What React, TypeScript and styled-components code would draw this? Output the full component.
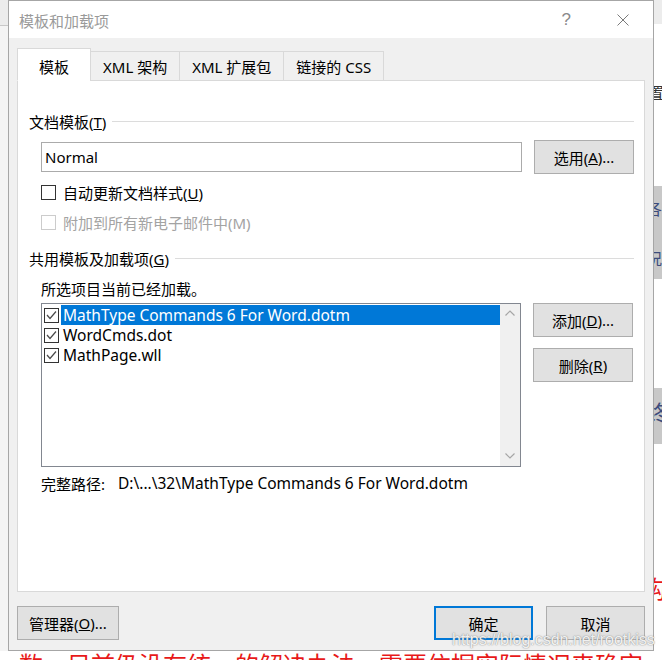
import styled, { createGlobalStyle } from "styled-components";

const GlobalStyle = createGlobalStyle`
  html, body {
    margin: 0;
    padding: 0;
    background: #ffffff;
  }
  body {
    font-family: "Noto Sans", "Noto Sans CJK SC", sans-serif;
  }
`;

const uiFont = `"Noto Sans", "Noto Sans CJK SC", sans-serif`;

const Page = styled.div`
  position: relative;
  width: 662px;
  height: 660px;
  overflow: hidden;
  background: #ffffff;
`;

const Stage = styled.div`
  display: flex;
  align-items: flex-start;
  height: 651px;
`;

const LeftStrip = styled.div`
  flex: none;
  width: 8px;
  height: 651px;
  background: #f4f4f4;
`;

const StripTop = styled.div`
  height: 25px;
  background: #ececec;
  border-bottom: 1px solid #c8c8c8;
`;

const RightStrip = styled.div`
  flex: none;
  width: 9px;
  height: 651px;
  overflow: hidden;
  display: flex;
  flex-direction: column;
  background: #ffffff;
`;

const StripBlock = styled.div<{ $top: number; $h: number; $bg: string }>`
  flex: none;
  margin-top: ${(p) => p.$top}px;
  height: ${(p) => p.$h}px;
  background: ${(p) => p.$bg};
  display: flex;
  flex-direction: column;
  overflow: hidden;
`;

const StripGlyph = styled.span<{ $top: number; $size: number; $color: string; $shift: number }>`
  display: block;
  margin-top: ${(p) => p.$top}px;
  margin-left: ${(p) => p.$shift}px;
  font-family: "Noto Sans CJK SC", sans-serif;
  font-size: ${(p) => p.$size}px;
  line-height: ${(p) => p.$size}px;
  color: ${(p) => p.$color};
  white-space: nowrap;
`;

const Dialog = styled.div`
  flex: none;
  box-sizing: border-box;
  width: 646px;
  height: 651px;
  border: 1px solid #a6a6a6;
  background: #f0f0f0;
  display: flex;
  flex-direction: column;
  font-family: ${uiFont};
  font-size: 15px;
  color: #000000;
`;

const TitleBar = styled.div`
  flex: none;
  height: 37px;
  background: #ffffff;
  display: flex;
  align-items: center;
  padding-left: 10px;
`;

const Title = styled.span`
  flex: 1;
  font-size: 15px;
  color: #9a9a9a;
  margin-top: 2px;
`;

const Help = styled.span`
  font-family: "Liberation Sans", sans-serif;
  font-size: 17px;
  color: #8a8a8a;
  margin-right: 46px;
  margin-top: 1px;
`;

const CloseIcon = styled.svg`
  width: 12px;
  height: 12px;
  margin-right: 24px;
  margin-top: 1px;
`;

const Body = styled.div`
  flex: 1;
  display: flex;
  flex-direction: column;
  padding: 10px 8px 0;
`;

const TabRow = styled.div`
  position: relative;
  z-index: 1;
  display: flex;
  align-items: flex-end;
  height: 33px;
  margin-bottom: -1px;
`;

const Tab = styled.div<{ $active?: boolean }>`
  box-sizing: border-box;
  height: ${(p) => (p.$active ? 33 : 30)}px;
  min-width: 74px;
  padding: ${(p) => (p.$active ? "3px" : "0")} 12px 0;
  margin-left: -1px;
  display: flex;
  align-items: center;
  justify-content: center;
  border: 1px solid #d9d9d9;
  border-bottom-color: ${(p) => (p.$active ? "#ffffff" : "#d9d9d9")};
  background: ${(p) => (p.$active ? "#ffffff" : "#f0f0f0")};
  white-space: nowrap;

  &:first-child {
    margin-left: 0;
  }
`;

const Panel = styled.div`
  flex: none;
  box-sizing: border-box;
  height: 512px;
  background: #ffffff;
  border: 1px solid #d9d9d9;
  padding: 30px 10px 0 11px;
  display: flex;
  flex-direction: column;
`;

const GroupHeader = styled.div<{ $top?: number }>`
  display: flex;
  align-items: center;
  gap: 6px;
  height: 20px;
  margin-top: ${(p) => p.$top ?? 0}px;
  white-space: nowrap;

  &::after {
    content: "";
    flex: 1;
    height: 1px;
    background: #dcdcdc;
  }
`;

const Indented = styled.div<{ $top: number }>`
  display: flex;
  align-items: center;
  gap: 12px;
  margin-top: ${(p) => p.$top}px;
  padding-left: 12px;
`;

const TextBox = styled.div`
  flex: 1;
  box-sizing: border-box;
  height: 30px;
  border: 1px solid #ababab;
  background: #ffffff;
  display: flex;
  align-items: center;
  padding-left: 3px;
`;

const Button = styled.div<{ $w?: number; $default?: boolean }>`
  flex: none;
  box-sizing: border-box;
  width: ${(p) => p.$w ?? 100}px;
  height: 34px;
  display: flex;
  align-items: center;
  justify-content: center;
  background: #e1e1e1;
  border: ${(p) => (p.$default ? "2px solid #0078d7" : "1px solid #adadad")};
  white-space: nowrap;
`;

const CheckLine = styled.label<{ $disabled?: boolean }>`
  display: flex;
  align-items: center;
  gap: 7px;
  height: 20px;
  color: ${(p) => (p.$disabled ? "#a3a3a3" : "#000000")};
  white-space: nowrap;
`;

const Box = styled.span<{ $disabled?: boolean }>`
  flex: none;
  box-sizing: border-box;
  width: 15px;
  height: 15px;
  border: 1px solid ${(p) => (p.$disabled ? "#cccccc" : "#333333")};
  background: #ffffff;
  display: flex;
  align-items: center;
  justify-content: center;
`;

const Note = styled.div`
  height: 20px;
  display: flex;
  align-items: center;
`;

const ListBox = styled.div`
  flex: none;
  box-sizing: border-box;
  width: 480px;
  height: 164px;
  border: 1px solid #828790;
  background: #ffffff;
  display: flex;
`;

const ListItems = styled.div`
  flex: 1;
  padding-top: 1px;
  display: flex;
  flex-direction: column;
`;

const ListItem = styled.div`
  display: flex;
  height: 20px;
`;

const CheckCell = styled.div`
  flex: none;
  width: 19px;
  display: flex;
  align-items: center;
  padding-left: 2px;
  box-sizing: border-box;
`;

const ItemText = styled.div<{ $selected?: boolean }>`
  flex: 1;
  display: flex;
  align-items: center;
  padding-left: 2px;
  background: ${(p) => (p.$selected ? "#0078d7" : "transparent")};
  color: ${(p) => (p.$selected ? "#ffffff" : "#000000")};
  font-size: 15.5px;
  white-space: nowrap;
`;

const ScrollBar = styled.div`
  flex: none;
  width: 20px;
  background: #f0f0f0;
  display: flex;
  flex-direction: column;
  justify-content: space-between;
  align-items: center;
  padding: 6px 0 7px;
  box-sizing: border-box;
`;

const SideButtons = styled.div`
  display: flex;
  flex-direction: column;
  gap: 11px;
  align-self: flex-start;
`;

const PathRow = styled.div<{ $top: number }>`
  display: flex;
  align-items: center;
  gap: 13px;
  height: 20px;
  margin-top: ${(p) => p.$top}px;
  padding-left: 12px;
  white-space: nowrap;
`;

const PathValue = styled.span`
  font-size: 15.5px;
`;

const Footer = styled.div`
  flex: none;
  display: flex;
  align-items: center;
  gap: 13px;
  padding-top: 14px;
`;

const Spacer = styled.div`
  flex: 1;
`;

const Watermark = styled.div`
  position: absolute;
  left: 452px;
  top: 631px;
  font-family: "Liberation Sans", Arial, sans-serif;
  font-size: 16px;
  line-height: 18px;
  color: rgba(255, 255, 255, 0.9);
  text-shadow: 0 0 1px rgba(120, 120, 120, 0.9), 0 0 2px rgba(150, 150, 150, 0.6);
  white-space: nowrap;
`;

const RedLine = styled.div`
  margin-top: 1px;
  padding-left: 19px;
  font-family: "Noto Sans CJK SC", sans-serif;
  font-size: 24px;
  line-height: 24px;
  color: #e81919;
  white-space: nowrap;
`;

const Check = () => (
  <svg width="11" height="10" viewBox="0 0 11 10">
    <polyline points="1,5 4,8.5 10,1.5" fill="none" stroke="#4a4a4a" strokeWidth="1.2" />
  </svg>
);

const Chevron = ({ down }: { down?: boolean }) => (
  <svg width="10" height="6" viewBox="0 0 10 6">
    <polyline
      points={down ? "0.5,0.5 5,5 9.5,0.5" : "0.5,5.5 5,1 9.5,5.5"}
      fill="none"
      stroke="#a6a6a6"
      strokeWidth="1.2"
    />
  </svg>
);

const items = [
  { name: "MathType Commands 6 For Word.dotm", selected: true },
  { name: "WordCmds.dot" },
  { name: "MathPage.wll" },
];

export default function App() {
  return (
    <Page>
      <GlobalStyle />
      <Stage>
        <LeftStrip>
          <StripTop />
        </LeftStrip>
        <Dialog>
          <TitleBar>
            <Title>模板和加载项</Title>
            <Help>?</Help>
            <CloseIcon viewBox="0 0 12 12">
              <path d="M0.5 0.5 L11.5 11.5 M11.5 0.5 L0.5 11.5" stroke="#7a7a7a" strokeWidth="1" />
            </CloseIcon>
          </TitleBar>
          <Body>
            <TabRow>
              <Tab $active>模板</Tab>
              <Tab>XML 架构</Tab>
              <Tab>XML 扩展包</Tab>
              <Tab>链接的 CSS</Tab>
            </TabRow>
            <Panel>
              <GroupHeader>
                <span>
                  文档模板(<u>T</u>)
                </span>
              </GroupHeader>
              <Indented $top={9}>
                <TextBox>Normal</TextBox>
                <Button>
                  选用(<u>A</u>)...
                </Button>
              </Indented>
              <Indented $top={8}>
                <CheckLine>
                  <Box />
                  <span>
                    自动更新文档样式(<u>U</u>)
                  </span>
                </CheckLine>
              </Indented>
              <Indented $top={10}>
                <CheckLine $disabled>
                  <Box $disabled />
                  <span>附加到所有新电子邮件中(M)</span>
                </CheckLine>
              </Indented>
              <GroupHeader $top={16}>
                <span>
                  共用模板及加载项(<u>G</u>)
                </span>
              </GroupHeader>
              <Indented $top={10}>
                <Note>所选项目当前已经加载。</Note>
              </Indented>
              <Indented $top={5}>
                <ListBox>
                  <ListItems>
                    {items.map((it) => (
                      <ListItem key={it.name}>
                        <CheckCell>
                          <Box>
                            <Check />
                          </Box>
                        </CheckCell>
                        <ItemText $selected={it.selected}>{it.name}</ItemText>
                      </ListItem>
                    ))}
                  </ListItems>
                  <ScrollBar>
                    <Chevron />
                    <Chevron down />
                  </ScrollBar>
                </ListBox>
                <SideButtons>
                  <Button>
                    添加(<u>D</u>)...
                  </Button>
                  <Button>
                    删除(<u>R</u>)
                  </Button>
                </SideButtons>
              </Indented>
              <PathRow $top={6}>
                <span>完整路径:</span>
                <PathValue>D:\...\32\MathType Commands 6 For Word.dotm</PathValue>
              </PathRow>
            </Panel>
            <Footer>
              <Button $w={102}>
                管理器(<u>O</u>)...
              </Button>
              <Spacer />
              <Button $w={99} $default>
                确定
              </Button>
              <Button $w={99}>取消</Button>
            </Footer>
          </Body>
        </Dialog>
        <RightStrip>
          <StripBlock $top={0} $h={24} $bg="#ececec" />
          <StripGlyph $top={60} $size={16} $color="#333333" $shift={-6}>
            置
          </StripGlyph>
          <StripBlock $top={86} $h={93} $bg="#c8c8c8">
            <StripGlyph $top={14} $size={16} $color="#3d4c7c" $shift={-8}>
              各
            </StripGlyph>
            <StripGlyph $top={34} $size={16} $color="#3d4c7c" $shift={-8}>
              况
            </StripGlyph>
          </StripBlock>
          <StripBlock $top={109} $h={56} $bg="#c8c8c8">
            <StripGlyph $top={12} $size={22} $color="#3d4c7c" $shift={-8}>
              终
            </StripGlyph>
          </StripBlock>
          <StripGlyph $top={132} $size={24} $color="#e81919" $shift={-12}>
            构
          </StripGlyph>
        </RightStrip>
      </Stage>
      <RedLine>数，目前仍没有统一的解决办法，需要依据实际情况来确定，</RedLine>
      <Watermark>https://blog.csdn.net/rootkiss</Watermark>
    </Page>
  );
}
